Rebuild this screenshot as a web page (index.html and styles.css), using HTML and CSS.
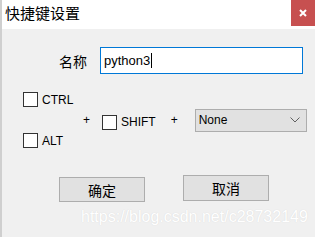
FILE: index.html
```html
<!DOCTYPE html>
<html>

<head>
    <title>快捷键设置</title>
    <meta charset="utf-8">
    <link rel="stylesheet" href="styles.css">
</head>

<body>
    <div class="window">

        <header class="titlebar">
            <span class="title">快捷键设置</span>
            <button class="close">
                <svg width="8" height="8" viewBox="0 0 8 8">
                    <path d="M1 1L7 7M7 1L1 7" stroke="#fff" stroke-width="2" />
                </svg>
            </button>
        </header>

        <main class="content">

            <div class="name-row">
                <label class="name-label">名称</label>
                <div class="textbox">python3<span class="caret"></span></div>
            </div>

            <div class="mods">
                <div class="mods-left">
                    <div class="check"><span class="box"></span>CTRL</div>
                    <div class="check"><span class="box"></span>ALT</div>
                </div>
                <span class="plus">+</span>
                <div class="check shift"><span class="box"></span>SHIFT</div>
                <span class="plus plus2">+</span>
                <div class="select">
                    <span>None</span>
                    <svg width="10" height="6" viewBox="0 0 10 6">
                        <polyline points="0.5,0.5 5,5 9.5,0.5" fill="none" stroke="#606060" stroke-width="1" />
                    </svg>
                </div>
            </div>

            <div class="buttons">
                <button class="btn ok">确定</button>
                <button class="btn">取消</button>
            </div>

        </main>

        <div class="watermark">https://blog.csdn.net/c28732149</div>
    </div>
</body>

</html>
```

FILE: styles.css
```css
body {
    margin: 0;
    width: 315px;
    height: 237px;
    overflow: hidden;
    background-color: #f0f0f0;
    font-family: "Liberation Sans", Arial, sans-serif;
    font-size: 12px;
    color: #000;
}

.window {
    position: relative;
    height: 237px;
    border-left: 2px solid #cfcfcf;
}

.titlebar {
    display: flex;
    align-items: flex-start;
    height: 29px;
    background-color: #fff;
}

.title {
    padding-left: 3px;
    line-height: 26px;
    font-family: "Noto Sans CJK SC", sans-serif;
    font-size: 15px;
}

.close {
    margin-left: auto;
    width: 24px;
    height: 26px;
    padding: 0;
    border: none;
    background-color: #c75050;
    display: flex;
    align-items: center;
    justify-content: center;
}

.name-row {
    display: flex;
    align-items: center;
    margin-top: 18px;
    padding-left: 57px;
}

.name-label {
    width: 31px;
    margin-right: 10px;
    font-family: "Noto Sans CJK SC", sans-serif;
    font-size: 14px;
}

.textbox {
    box-sizing: border-box;
    display: flex;
    align-items: center;
    width: 203px;
    height: 27px;
    padding-left: 3px;
    border: 1px solid #0078d7;
    background-color: #fff;
    font-size: 13px;
}

.caret {
    display: inline-block;
    width: 1px;
    height: 15px;
    margin-left: 1px;
    background-color: #000;
}

.mods {
    display: flex;
    align-items: center;
    margin-top: 18px;
    padding-left: 21px;
}

.mods-left {
    display: flex;
    flex-direction: column;
    gap: 26px;
    width: 60px;
}

.check {
    display: flex;
    align-items: center;
    gap: 4px;
}

.box {
    box-sizing: border-box;
    width: 15px;
    height: 15px;
    border: 1px solid #333;
    background-color: #fff;
}

.shift {
    margin-top: 4px;
}

.plus {
    width: 7px;
    margin-right: 12px;
}

.plus2 {
    margin-left: 15px;
    margin-right: 17px;
}

.select {
    box-sizing: border-box;
    display: flex;
    align-items: center;
    justify-content: space-between;
    width: 112px;
    height: 23px;
    padding: 0 6px 0 3px;
    border: 1px solid #adadad;
    background-color: #e1e1e1;
}

.buttons {
    display: flex;
    align-items: flex-start;
    gap: 38px;
    margin-top: 27px;
    padding-left: 57px;
}

.btn {
    box-sizing: border-box;
    width: 86px;
    height: 26px;
    padding: 0;
    border: 1px solid #adadad;
    background-color: #e1e1e1;
    font-family: "Noto Sans CJK SC", sans-serif;
    font-size: 14px;
    color: #000;
}

.ok {
    margin-top: 2px;
    height: 25px;
}

.watermark {
    position: absolute;
    left: 79px;
    top: 208px;
    font-family: "Liberation Sans", Arial, sans-serif;
    font-size: 16px;
    color: #fff;
    text-shadow: 0 0 1px #d2d2d2;
}
```
